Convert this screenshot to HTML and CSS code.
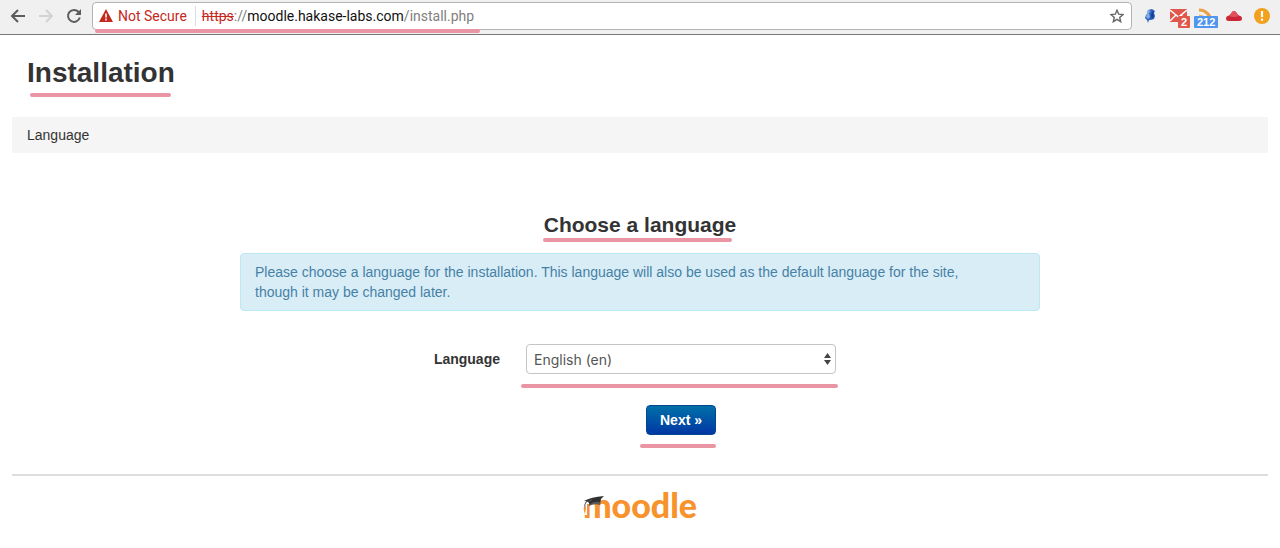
FILE: index.html
```
<!DOCTYPE html>
<html lang="en">
<head>
    <meta charset="utf-8">
    <title>Installation</title>
    <link rel="stylesheet" href="styles.css">
</head>
<body>
    <div class="toolbar">
        <button class="nav" aria-label="Back">
            <svg width="16" height="16" viewBox="0 0 16 16"><path d="M15 8H3M8 2L2 8l6 6" fill="none" stroke="#5c5c5c" stroke-width="2"/></svg>
        </button>
        <button class="nav" aria-label="Forward" disabled>
            <svg width="16" height="16" viewBox="0 0 16 16"><path d="M1 8h12M8 2l6 6-6 6" fill="none" stroke="#d2d2d2" stroke-width="2"/></svg>
        </button>
        <button class="nav" aria-label="Reload">
            <svg width="16" height="16" viewBox="0 0 16 16"><path d="M13.8 9.5A6 6 0 1 1 12.6 4" fill="none" stroke="#5c5c5c" stroke-width="2"/><path d="M15 1v6H9z" fill="#5c5c5c"/></svg>
        </button>
        <div class="address mark">
            <svg class="warning" width="14" height="13" viewBox="0 0 14 13"><path d="M7 0l7 13H0z" fill="#c5281c"/><path d="M7 4.500v4M7 9.500v2" stroke="#fff" stroke-width="1.600"/></svg>
            <span class="secure">Not Secure</span>
            <span class="url"><s>https</s>://<b>moodle.hakase-labs.com</b>/install.php</span>
            <button class="star" aria-label="Bookmark">
                <svg width="14" height="14" viewBox="0 0 14 14"><path d="M7 1.200l1.700 4 4.300.4-3.300 2.800 1 4.300L7 10.400l-3.700 2.300 1-4.300L1 5.600l4.300-.4z" fill="none" stroke="#666" stroke-width="1.400"/></svg>
            </button>
        </div>
        <button class="nav" aria-label="Notes">
            <svg width="12" height="14" viewBox="0 0 12 14"><path d="M4 1l4-1 3 2-1 2 1 3-1 3-3 1-2 0-1 3-1-3-2-2 1-3 1-1z" fill="#2f62bd"/><path d="M4 1l3 1-2 2 1 4-2 2-2-2 1-3z" fill="#80aee9"/><path d="M8 3l2-1-1 2 1 3-2 3-1-3z" fill="#173f91"/></svg>
        </button>
        <button class="nav" aria-label="Mail">
            <svg width="17" height="13" viewBox="0 0 17 13"><path d="M0 0h17v13H0z" fill="#e2574c"/><path d="M0 1l8.500 7L17 1M0 12l6-6M17 12l-6-6" fill="none" stroke="#fff" stroke-width="1.400"/></svg>
            <span class="badge red">2</span>
        </button>
        <button class="nav" aria-label="Feeds">
            <svg width="14" height="16" viewBox="0 0 14 16"><path d="M0 2a12 12 0 0 1 12 13" fill="none" stroke="#e9a044" stroke-width="3"/><path d="M0 8a7 7 0 0 1 7 7" fill="none" stroke="#eeb772" stroke-width="3"/></svg>
            <span class="badge blue">212</span>
        </button>
        <button class="nav" aria-label="Cloud">
            <svg width="16" height="12" viewBox="0 0 16 12"><path d="M3 11Q0 11 0 8.500T3 5.500Q4 5 5 3.500Q6 1 8 1T11 3.500Q12 5 13 5.500Q16 6 16 8.500T13 11z" fill="#c92638"/><path d="M3 6Q4.500 5 5 3.500Q6 1 8 1T11 3.500Q11.500 5 13 6Q8 8 3 6z" fill="#e4505b"/></svg>
        </button>
        <button class="nav" aria-label="Update available">
            <svg width="16" height="16" viewBox="0 0 16 16"><circle cx="8" cy="8" r="8" fill="#f1a11e"/><path d="M8 3v6M8 10.500v2.200" stroke="#fff" stroke-width="2.200"/></svg>
        </button>
    </div>

    <div class="page">
        <h1><span class="mark">Installation</span></h1>
        <div class="breadcrumb">Language</div>

        <form class="install">
            <h2><span class="mark">Choose a language</span></h2>
            <div class="alert">Please choose a language for the installation. This language will also be used as the default language for the site, though it may be changed later.</div>
            <div class="fields">
                <label for="lang">Language</label>
                <div class="select mark">
                    <select id="lang">
                        <option>English (en)</option>
                    </select>
                    <svg class="arrows" width="7" height="12" viewBox="0 0 7 12"><path d="M3.500 0L7 5H0zM0 7h7l-3.500 5z" fill="#444"/></svg>
                </div>
                <div class="next mark">
                    <button class="btn" type="button">Next »</button>
                </div>
            </div>
        </form>

        <div class="footer">
            <a class="logo" href="#">moodle
                <svg class="cap" width="22" height="20" viewBox="0 0 22 20"><path d="M0 4h8v5H4v11H0z" fill="#fff"/><path d="M6 6l0 5q5-3 11-1l1-5z" fill="#5a5a5a"/><path d="M1 6Q8 2 21 1Q18 3 17 7Q11 6 7 9Q5 6 1 6z" fill="#303030"/><path d="M9 5L3 7Q1 10 2 13" fill="none" stroke="#555" stroke-width="1"/><path d="M1 12Q0 15 2 19L3 13z" fill="#f7922d"/></svg>
            </a>
        </div>
    </div>
</body>
</html>
```

FILE: styles.css
```
* {
    box-sizing: border-box;
}
body {
    margin: 0;
    background: #fff;
    color: #333;
    font: 14px/20px "Liberation Sans", Arial, sans-serif;
}
h1, h2 {
    margin: 0;
}
button {
    font: inherit;
    padding: 0;
    border: 0;
    background: none;
}
svg {
    display: block;
}

/* browser bar */
.toolbar {
    display: flex;
    align-items: center;
    height: 35px;
    padding: 0 4px 3px;
    background: #f0f0f0;
    border-bottom: 1px solid #777;
}
.nav {
    display: flex;
    flex: none;
    justify-content: center;
    position: relative;
    width: 28px;
}
.address {
    display: flex;
    flex: 1;
    align-items: center;
    height: 28px;
    margin: 0 4px;
    padding: 0 7px 0 6px;
    background: #fff;
    border: 1px solid #b4b4b4;
    border-radius: 4px;
    font-family: Roboto, sans-serif;
}
.secure {
    margin: 0 6px 0 5px;
    padding-right: 8px;
    border-right: 1px solid #ddd;
    color: #c5281c;
}
.url {
    flex: 1;
    color: #808080;
}
.url s {
    color: #c5281c;
}
.url b {
    color: #111;
    font-weight: 400;
}
.badge {
    position: absolute;
    left: 14px;
    top: 7px;
    padding: 0 3px;
    border-radius: 1px;
    color: #fff;
    font: bold 11px/12px "Liberation Sans", Arial, sans-serif;
}
.red {
    background: #e2574c;
}
.blue {
    left: 2px;
    top: 8px;
    background: #5095ee;
}

/* pink highlight strokes */
.mark {
    position: relative;
}
.mark::after {
    content: "";
    position: absolute;
    left: -1px;
    right: 4px;
    bottom: -6px;
    height: 4px;
    border-radius: 2px;
    background: #e995a3;
}
.address::after {
    left: 2px;
    right: auto;
    bottom: -4px;
    width: 385px;
}
h1 .mark::after {
    left: 3px;
    bottom: -9px;
}

/* page */
.page {
    padding: 0 12px;
}
h1 {
    padding: 18px 15px 24px;
    font-size: 28px;
    line-height: 40px;
}
.breadcrumb {
    padding: 8px 15px;
    background: #f5f5f5;
}
.install {
    max-width: 800px;
    margin: 0 auto;
    padding-top: 52px;
}
h2 {
    margin-bottom: 8px;
    font-size: 21px;
    line-height: 40px;
    text-align: center;
}
.alert {
    padding: 8px 35px 8px 14px;
    border: 1px solid #bce8f1;
    border-radius: 4px;
    background: #d9edf7;
    color: #4681a5;
}
.fields {
    display: grid;
    grid-template-columns: 260px 310px;
    align-items: center;
    gap: 31px 26px;
    padding: 33px 0 39px;
}
label {
    font-weight: bold;
    text-align: right;
}
select {
    display: block;
    appearance: none;
    width: 100%;
    height: 30px;
    padding: 0 7px;
    border: 1px solid #c4c4c4;
    border-radius: 4px;
    background: #fff;
    color: #555;
    font: 14px Inter, sans-serif;
}
.select::after {
    left: -5px;
    right: -2px;
    bottom: -14px;
}
.arrows {
    position: absolute;
    right: 5px;
    top: 9px;
}
.next {
    grid-column: 2;
    justify-self: center;
}
.next::after {
    left: -6px;
    right: 0;
    bottom: -13px;
}
.btn {
    display: block;
    padding: 4px 13px;
    border: 1px solid #03468f;
    border-radius: 4px;
    background: linear-gradient(#0070a8, #0037a4);
    color: #fff;
    font-weight: bold;
}
.footer {
    display: flex;
    justify-content: center;
    padding: 12px 0;
    border-top: 2px solid #ddd;
}
.logo {
    position: relative;
    color: #f7922d;
    font: 900 34px/34px Lato, sans-serif;
    text-decoration: none;
}
.cap {
    position: absolute;
    left: 0;
    top: 7px;
}
```
